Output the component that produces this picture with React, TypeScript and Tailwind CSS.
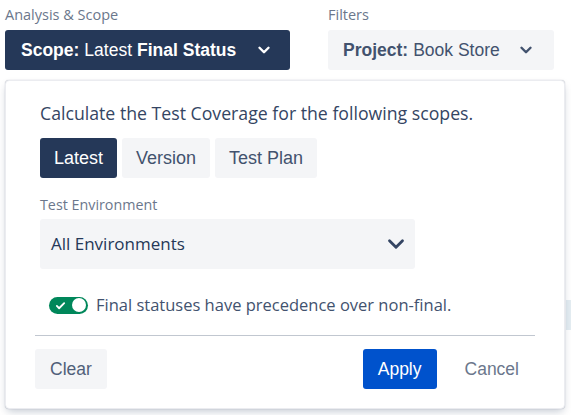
import { useState } from "react";

const sans = "font-['Open_Sans',sans-serif]";
const arial = "font-['Liberation_Sans',Arial,sans-serif]";

function Chevron({ className, width = 3 }: { className?: string; width?: number }) {
  return (
    <svg viewBox="0 0 24 24" className={className} fill="none" stroke="currentColor" strokeWidth={width} strokeLinecap="round" strokeLinejoin="round" aria-hidden>
      <path d="M6 9l6 6 6-6" />
    </svg>
  );
}

export default function App() {
  const [scope, setScope] = useState("Latest");
  const [finalFirst, setFinalFirst] = useState(true);
  const scopes = ["Latest", "Version", "Test Plan"];

  return (
    <div className="relative h-[415px] w-[571px] overflow-hidden bg-white">
      {/* Barele de sus */}
      <div className="flex gap-[38px] px-[5px] pt-[5px]">
        <div className="flex flex-col">
          <span className={`${sans} h-5 text-[14.5px] leading-5 text-[#6b778c]`}>Analysis &amp; Scope</span>
          <button
            type="button"
            className={`${arial} mt-[5px] flex h-10 w-[285px] items-center rounded-[3px] bg-[#253858] pl-4 text-[17.5px] text-white`}
          >
            <b>Scope:</b>
            <span className="ml-[5px]">Latest</span>
            <b className="ml-[5px]">Final Status</b>
            <Chevron className="ml-[19px] h-[18px] w-[18px]" width={3.2} />
          </button>
        </div>
        <div className="flex flex-col">
          <span className={`${sans} h-5 text-[14.5px] leading-5 text-[#6b778c]`}>Filters</span>
          <button
            type="button"
            className={`${arial} mt-[5px] flex h-10 w-[226px] items-center rounded-[3px] bg-[#f4f5f7] pl-[15px] text-[17.5px] text-[#42526e]`}
          >
            <b>Project:</b>
            <span className="ml-[5px]">Book Store</span>
            <Chevron className="ml-[17px] h-[18px] w-[18px]" width={3.2} />
          </button>
        </div>
      </div>

      {/* Fundalul din dreapta */}
      <div className="absolute right-0 top-[300px] h-[30px] w-[5px] bg-[#e4edf2]" />

      {/* Panoul */}
      <div className="relative mx-[5px] mt-[10px] flex h-[329px] w-[560px] flex-col rounded-[4px] border border-[#ebecf0] bg-white px-[34px] pt-[20px] shadow-[0_4px_8px_-2px_rgba(9,30,66,0.25),0_0_1px_rgba(9,30,66,0.31)]">
        <p className={`${sans} whitespace-nowrap text-[17.7px] leading-6 text-[#344563]`}>
          Calculate the Test Coverage for the following scopes.
        </p>
        <div className="mt-[13px] flex gap-[5px]">
          {scopes.map((s) => (
            <button
              key={s}
              type="button"
              onClick={() => setScope(s)}
              className={`${arial} h-10 rounded-[3px] px-[14px] text-[18px] ${
                scope === s ? "bg-[#253858] text-white" : "bg-[#f4f5f7] text-[#42526e]"
              }`}
            >
              {s}
            </button>
          ))}
        </div>

        <span className={`${sans} mt-[17px] h-5 text-[14.3px] leading-5 text-[#6b778c]`}>Test Environment</span>
        <div className="mt-[4px] flex h-[50px] w-[375px] items-center justify-between rounded-[3px] bg-[#f4f5f7] pl-[11px] pr-[6px]">
          <span className={`${sans} text-[17px] text-[#253858]`}>All Environments</span>
          <Chevron className="h-[26px] w-[26px] text-[#344563]" width={2.6} />
        </div>

        <label className="mt-[24px] flex h-6 items-center">
          <button
            type="button"
            onClick={() => setFinalFirst((v) => !v)}
            className={`ml-[9px] flex h-[17px] w-[39px] shrink-0 items-center justify-between rounded-full px-[2px] ${
              finalFirst ? "bg-[#00875a]" : "bg-[#a5adba]"
            }`}
          >
            <svg viewBox="0 0 12 12" className="ml-[4px] h-[11px] w-[11px]" fill="none" stroke="white" strokeWidth="2" strokeLinecap="round" strokeLinejoin="round" aria-hidden>
              <path d="M2 6.5l2.5 2.5L10 3.5" />
            </svg>
            <span className="h-[14px] w-[14px] rounded-full bg-white" />
          </button>
          <span className={`${sans} ml-[8px] whitespace-nowrap text-[16.5px] text-[#42526e]`}>
            Final statuses have precedence over non-final.
          </span>
        </label>

        <div className="-mx-[5px] mt-[18px] h-px bg-[#c1c7d0]" />

        <div className="-mx-[5px] mt-[13px] flex items-center">
          <button type="button" className={`${arial} h-10 rounded-[3px] bg-[#f4f5f7] px-[15px] text-[17.5px] text-[#505f79]`}>
            Clear
          </button>
          <button type="button" className={`${arial} ml-auto h-10 rounded-[3px] bg-[#0052cc] px-[15px] text-[17.5px] text-white`}>
            Apply
          </button>
          <button type="button" className={`${arial} ml-[12px] h-10 rounded-[3px] px-4 text-[17.5px] text-[#6b778c]`}>
            Cancel
          </button>
        </div>
      </div>
    </div>
  );
}
